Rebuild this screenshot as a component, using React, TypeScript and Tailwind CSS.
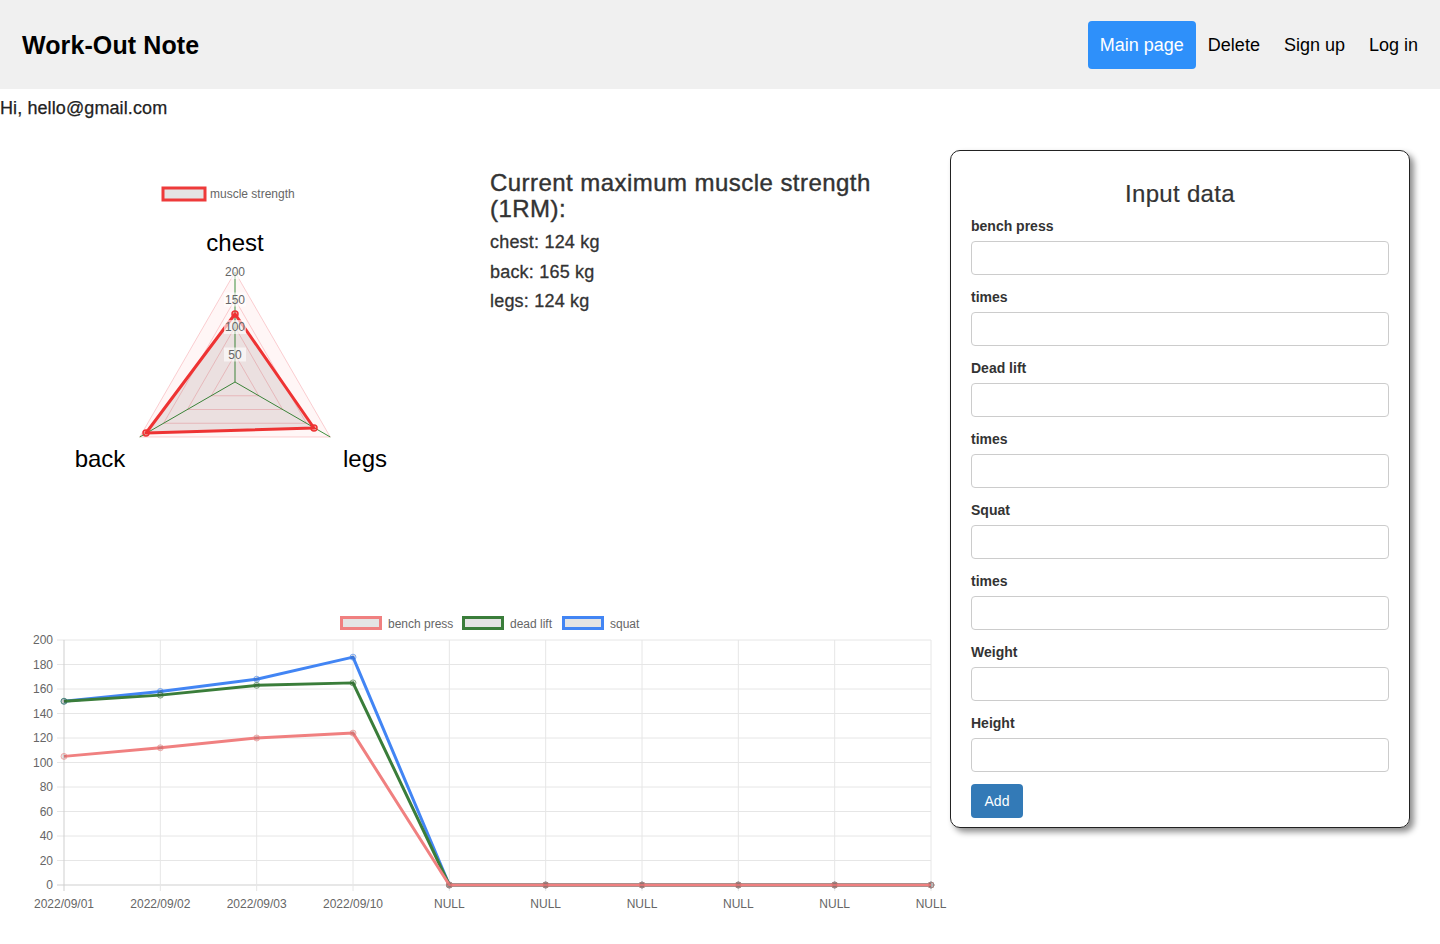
const dates = ["2022/09/01", "2022/09/02", "2022/09/03", "2022/09/10", "NULL", "NULL", "NULL", "NULL", "NULL", "NULL"];

const series = [
  { name: "squat", color: "#4285f4", data: [150, 158, 168, 186, 0, 0, 0, 0, 0, 0] },
  { name: "dead lift", color: "#3a7d3a", data: [150, 155, 163, 165, 0, 0, 0, 0, 0, 0] },
  { name: "bench press", color: "#f08080", data: [105, 112, 120, 124, 0, 0, 0, 0, 0, 0] },
];

const fields = ["bench press", "times", "Dead lift", "times", "Squat", "times", "Weight", "Height"];

const px = (i: number) => 64 + (i * 867) / 9;
const py = (v: number) => 885 - v * 1.225;

// radar geometry, page coordinates
const CX = 235;
const CY = 382;
const R = 110;
const corner = (r: number, k: number) => {
  const a = -Math.PI / 2 + (k * 2 * Math.PI) / 3;
  return [CX + r * Math.cos(a), CY + r * Math.sin(a)];
};
const tri = (r: number) => [0, 1, 2].map((k) => corner(r, k).join(",")).join(" ");

function Radar() {
  const pts = [
    [235, 314],
    [314, 428],
    [146, 433],
  ];
  return (
    <svg width={470} height={482} viewBox="0 118 470 482" className="shrink-0">
      <rect x={163} y={188} width={42} height={12} fill="#e4e4e4" stroke="#ee3a3a" strokeWidth={3} />
      <text x={210} y={198} fontSize={12} fill="#666">muscle strength</text>
      <polygon points={tri(R)} fill="#fff6f6" />
      {[27.5, 55, 82.5, 110].map((r) => (
        <polygon key={r} points={tri(r)} fill="none" stroke="rgba(240,120,130,0.35)" strokeWidth={1} />
      ))}
      {[0, 1, 2].map((k) => {
        const [x, y] = corner(R, k);
        return <line key={k} x1={CX} y1={CY} x2={x} y2={y} stroke="#3c8f3c" strokeWidth={1} />;
      })}
      <polygon points={pts.map((p) => p.join(",")).join(" ")} fill="rgba(60,30,30,0.1)" stroke="#ee3333" strokeWidth={3} strokeLinejoin="round" />
      {pts.map(([x, y], i) => (
        <circle key={i} cx={x} cy={y} r={3} fill="rgba(238,51,51,0.3)" stroke="#ee3333" strokeWidth={1.5} />
      ))}
      {[200, 150, 100, 50].map((v) => {
        const y = CY - (v / 200) * R;
        return (
          <g key={v}>
            <rect x={CX - 11} y={y - 7} width={22} height={14} fill="rgba(255,255,255,0.6)" />
            <text x={CX} y={y + 4} fontSize={12} fill="#666" textAnchor="middle">{v}</text>
          </g>
        );
      })}
      <text x={235} y={251} fontSize={24} fill="#000" textAnchor="middle">chest</text>
      <text x={365} y={467} fontSize={24} fill="#000" textAnchor="middle">legs</text>
      <text x={100} y={467} fontSize={24} fill="#000" textAnchor="middle">back</text>
    </svg>
  );
}

function LineChart() {
  const legend = [
    { name: "bench press", color: "#f08080", x: 340 },
    { name: "dead lift", color: "#3a7d3a", x: 462 },
    { name: "squat", color: "#4285f4", x: 562 },
  ];
  return (
    <svg width={940} height={320} viewBox="0 600 940 320" className="overflow-visible">
      {legend.map((l) => (
        <g key={l.name}>
          <rect x={l.x + 1.5} y={617.5} width={39} height={11} fill="#e4e4e4" stroke={l.color} strokeWidth={3} />
          <text x={l.x + 48} y={628} fontSize={12} fill="#666">{l.name}</text>
        </g>
      ))}
      {Array.from({ length: 11 }, (_, i) => {
        const v = i * 20;
        const y = py(v);
        return (
          <g key={v}>
            <line x1={57} y1={y} x2={931} y2={y} stroke={v === 0 ? "#cfcfcf" : "#e6e6e6"} strokeWidth={1} />
            <text x={53} y={y + 4} fontSize={12} fill="#666" textAnchor="end">{v}</text>
          </g>
        );
      })}
      {dates.map((d, i) => (
        <g key={i}>
          <line x1={px(i)} y1={640} x2={px(i)} y2={891} stroke={i === 0 ? "#cfcfcf" : "#e6e6e6"} strokeWidth={1} />
          <text x={px(i)} y={908} fontSize={12} fill="#666" textAnchor="middle">{d}</text>
        </g>
      ))}
      {series.map((s) => (
        <g key={s.name}>
          <polyline
            points={s.data.map((v, i) => `${px(i)},${py(v)}`).join(" ")}
            fill="none"
            stroke={s.color}
            strokeWidth={3}
            strokeLinejoin="round"
          />
          {s.data.map((v, i) => (
            <circle key={i} cx={px(i)} cy={py(v)} r={3} fill="rgba(0,0,0,0.1)" stroke={s.color} strokeOpacity={0.6} strokeWidth={1} />
          ))}
        </g>
      ))}
    </svg>
  );
}

export default function App() {
  return (
    <div className="min-h-screen bg-white font-['Liberation_Sans',Arial,sans-serif] text-[#333]">
      <header className="flex h-[89px] items-center justify-between bg-[#f0f0f0] pl-[22px] pr-[10px] pt-[2px]">
        <h1 className="text-[25px] font-bold tracking-[0.1px] text-black">Work-Out Note</h1>
        <nav className="flex items-center text-[18px] text-black">
          <a className="-mt-[1px] flex h-12 items-center rounded bg-[#2e90fa] px-3 pt-[1px] text-white">Main page</a>
          <a className="px-3">Delete</a>
          <a className="px-3">Sign up</a>
          <a className="px-3">Log in</a>
        </nav>
      </header>

      <p className="pt-[9px] text-[18px] leading-[20px] tracking-[0.1px] text-[#222] [-webkit-text-stroke:0.25px_#222]">
        Hi, hello@gmail.com
      </p>

      <div className="flex gap-[10px]">
        <div className="w-[940px] shrink-0">
          <div className="flex">
            <Radar />
            <div className="ml-[20px] w-[400px] pt-[52px]">
              <h2 className="text-[24px] leading-[26px] tracking-[0.45px] [-webkit-text-stroke:0.4px_#333]">
                Current maximum muscle strength (1RM):
              </h2>
              <div className="mt-[10px] flex flex-col gap-[9.5px] text-[18px] leading-[20px] tracking-[0.2px] [-webkit-text-stroke:0.3px_#333]">
                <p>chest: 124 kg</p>
                <p>back: 165 kg</p>
                <p>legs: 124 kg</p>
              </div>
            </div>
          </div>
          <LineChart />
        </div>

        <form className="mt-[32px] h-[678px] w-[460px] shrink-0 rounded-[10px] border border-[#222] px-5 pt-[30px] shadow-[4px_4px_6px_rgba(0,0,0,0.45)]">
          <h2 className="mb-[11px] text-center text-[24px] leading-[26px] tracking-[0.3px] [-webkit-text-stroke:0.2px_#333]">Input data</h2>
          {fields.map((f, i) => (
            <div key={i} className="mb-[14px]">
              <label className="mb-[6px] block text-[14px] font-bold leading-[17px]">{f}</label>
              <input className="block h-[34px] w-full rounded border border-[#ccc] bg-white px-3" />
            </div>
          ))}
          <button type="button" className="-mt-[2px] h-[34px] w-[52px] rounded bg-[#337ab7] text-[14px] text-white">
            Add
          </button>
        </form>
      </div>
    </div>
  );
}
